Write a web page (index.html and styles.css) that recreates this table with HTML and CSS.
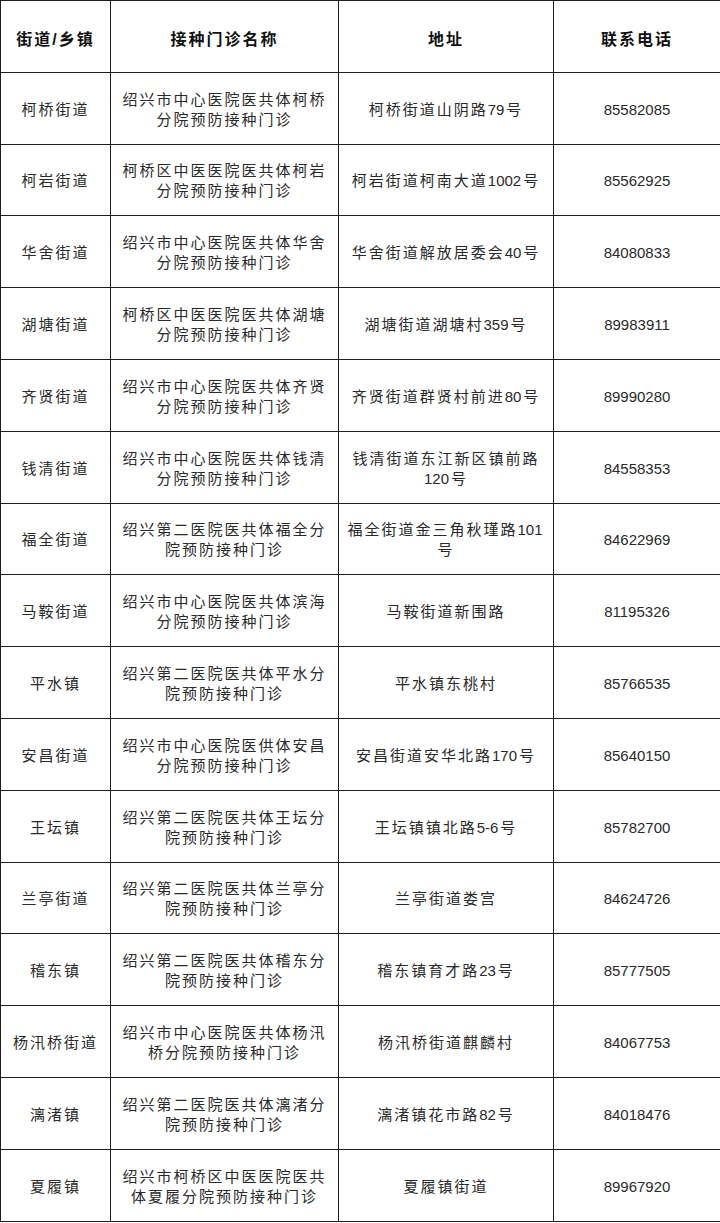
FILE: index.html
```html
<!DOCTYPE html>
<html lang="zh-CN">
<head>
<meta charset="utf-8">
<title>接种门诊</title>
<link rel="stylesheet" href="styles.css">
</head>
<body>
<table class="clinics">
  <colgroup>
    <col class="c1"><col class="c2"><col class="c3"><col class="c4">
  </colgroup>
  <thead>
    <tr><th>街道/乡镇</th><th>接种门诊名称</th><th>地址</th><th>联系电话</th></tr>
  </thead>
  <tbody>
    <tr><td>柯桥街道</td><td>绍兴市中心医院医共体柯桥分院预防接种门诊</td><td>柯桥街道山阴路<span class="num">79</span>号</td><td class="tel">85582085</td></tr>
    <tr><td>柯岩街道</td><td>柯桥区中医医院医共体柯岩分院预防接种门诊</td><td>柯岩街道柯南大道<span class="num">1002</span>号</td><td class="tel">85562925</td></tr>
    <tr><td>华舍街道</td><td>绍兴市中心医院医共体华舍分院预防接种门诊</td><td>华舍街道解放居委会<span class="num">40</span>号</td><td class="tel">84080833</td></tr>
    <tr><td>湖塘街道</td><td>柯桥区中医医院医共体湖塘分院预防接种门诊</td><td>湖塘街道湖塘村<span class="num">359</span>号</td><td class="tel">89983911</td></tr>
    <tr><td>齐贤街道</td><td>绍兴市中心医院医共体齐贤分院预防接种门诊</td><td>齐贤街道群贤村前进<span class="num">80</span>号</td><td class="tel">89990280</td></tr>
    <tr><td>钱清街道</td><td>绍兴市中心医院医共体钱清分院预防接种门诊</td><td>钱清街道东江新区镇前路<span class="num">120</span>号</td><td class="tel">84558353</td></tr>
    <tr><td>福全街道</td><td>绍兴第二医院医共体福全分院预防接种门诊</td><td>福全街道金三角秋瑾路<span class="num">101</span>号</td><td class="tel">84622969</td></tr>
    <tr><td>马鞍街道</td><td>绍兴市中心医院医共体滨海分院预防接种门诊</td><td>马鞍街道新围路</td><td class="tel">81195326</td></tr>
    <tr><td>平水镇</td><td>绍兴第二医院医共体平水分院预防接种门诊</td><td>平水镇东桃村</td><td class="tel">85766535</td></tr>
    <tr><td>安昌街道</td><td>绍兴市中心医院医供体安昌分院预防接种门诊</td><td>安昌街道安华北路<span class="num">170</span>号</td><td class="tel">85640150</td></tr>
    <tr><td>王坛镇</td><td>绍兴第二医院医共体王坛分院预防接种门诊</td><td>王坛镇镇北路<span class="num">5-6</span>号</td><td class="tel">85782700</td></tr>
    <tr><td>兰亭街道</td><td>绍兴第二医院医共体兰亭分院预防接种门诊</td><td>兰亭街道娄宫</td><td class="tel">84624726</td></tr>
    <tr><td>稽东镇</td><td>绍兴第二医院医共体稽东分院预防接种门诊</td><td>稽东镇育才路<span class="num">23</span>号</td><td class="tel">85777505</td></tr>
    <tr><td>杨汛桥街道</td><td>绍兴市中心医院医共体杨汛桥分院预防接种门诊</td><td>杨汛桥街道麒麟村</td><td class="tel">84067753</td></tr>
    <tr><td>漓渚镇</td><td>绍兴第二医院医共体漓渚分院预防接种门诊</td><td>漓渚镇花市路<span class="num">82</span>号</td><td class="tel">84018476</td></tr>
    <tr><td>夏履镇</td><td>绍兴市柯桥区中医医院医共体夏履分院预防接种门诊</td><td>夏履镇街道</td><td class="tel">89967920</td></tr>
  </tbody>
</table>
</body>
</html>
```
FILE: styles.css
```css
html, body {
  margin: 0;
  padding: 0;
  background: #ffffff;
}

.clinics {
  border-collapse: collapse;
  table-layout: fixed;
  width: 720px;
  font-family: "Liberation Sans", "Noto Sans CJK SC", sans-serif;
  color: #2a2a2a;
}

.c1 { width: 110px; }
.c2 { width: 228px; }
.c3 { width: 215px; }
.c4 { width: 167px; }

.clinics th,
.clinics td {
  border: 1px solid #1e1e1e;
  height: 71.8px;
  padding: 3px 5px 0;
  text-align: center;
  vertical-align: middle;
  box-sizing: border-box;
}

.clinics th {
  font-size: 16px;
  font-weight: bold;
  letter-spacing: 2px;
  color: #111111;
}

.clinics td {
  font-size: 15px;
  line-height: 20px;
  letter-spacing: 2px;
}

.clinics .num {
  letter-spacing: 0;
  margin-right: 2px;
}

.clinics td.tel {
  letter-spacing: 0;
}
```
